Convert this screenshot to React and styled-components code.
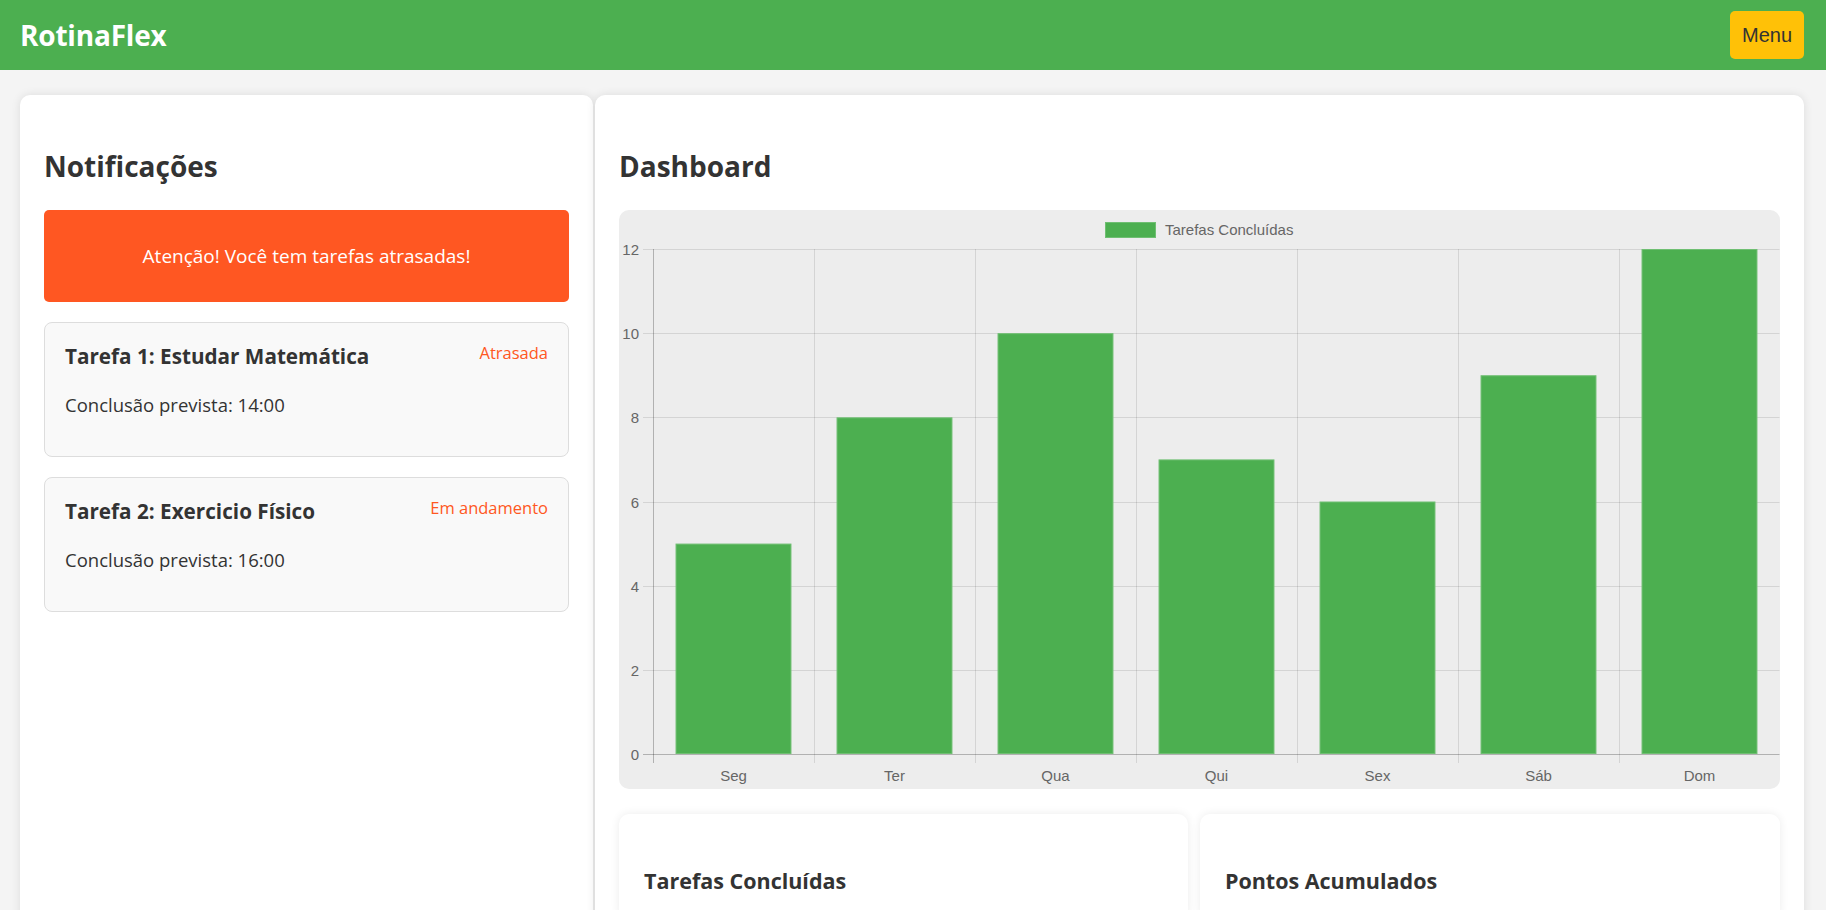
import React from 'react';
import styled, { createGlobalStyle } from 'styled-components';

const GlobalStyle = createGlobalStyle`
  body {
    margin: 0;
    background: #f4f4f4;
    color: #333;
    font-family: "Open Sans", "Noto Sans", sans-serif;
  }
`;

const Header = styled.header`
  align-items: center;
  background: #4caf50;
  box-sizing: border-box;
  display: flex;
  height: 70px;
  justify-content: space-between;
  padding: 0 22px 0 20px;
`;

const Logo = styled.h1`
  color: #fff;
  font-size: 28px;
  font-weight: 700;
  letter-spacing: -0.2px;
  line-height: 1;
  margin: 0;
`;

const MenuButton = styled.button`
  background: #ffc107;
  border: none;
  border-radius: 5px;
  color: #333;
  font-family: "Liberation Sans", Arial, sans-serif;
  font-size: 20px;
  height: 48px;
  padding: 0 12px;
`;

const Main = styled.main`
  display: grid;
  gap: 2px;
  grid-template-columns: 573px 1fr;
  padding: 25px 22px 0 20px;
`;

const Panel = styled.section`
  background: #fff;
  border-radius: 10px;
  box-shadow: 0 0 10px rgba(0, 0, 0, 0.1);
  padding: 24px;
`;

const PanelTitle = styled.h2`
  font-size: 28px;
  font-weight: 700;
  line-height: 1;
  margin: 33px 0 30px;
`;

const Alert = styled.div`
  align-items: center;
  background: #ff5722;
  border-radius: 5px;
  color: #fff;
  display: flex;
  font-size: 19px;
  height: 92px;
  justify-content: center;
  margin-bottom: 20px;
`;

const TaskCard = styled.article`
  background: #f9f9f9;
  border: 1px solid #ddd;
  border-radius: 8px;
  margin-bottom: 20px;
  padding: 20px;
`;

const TaskHead = styled.div`
  align-items: flex-start;
  display: flex;
  justify-content: space-between;
`;

const TaskTitle = styled.h3`
  font-size: 20.7px;
  font-weight: 700;
  line-height: 26px;
  margin: 0;
`;

const Status = styled.span`
  color: #ff5722;
  font-size: 16.5px;
  line-height: 20px;
`;

const TaskTime = styled.p`
  font-size: 18.5px;
  line-height: 24px;
  margin: 24px 0 19px;
`;

const ChartBox = styled.div`
  background: #ededed;
  border-radius: 10px;
  overflow: hidden;

  svg {
    display: block;
    width: 100%;
  }

  text {
    fill: #666;
    font-family: "Liberation Sans", Arial, sans-serif;
    font-size: 15px;
  }
`;

const Stats = styled.div`
  display: grid;
  gap: 12px;
  grid-template-columns: 49% 1fr;
  margin-top: 25px;
`;

const StatCard = styled.div`
  background: #fff;
  border-radius: 10px;
  box-shadow: 0 0 10px rgba(0, 0, 0, 0.08);
  padding: 25px;
`;

const StatTitle = styled.h3`
  font-size: 21.5px;
  font-weight: 700;
  line-height: 28px;
  margin: 28px 0 0;
`;

const tasks = [
  { id: 1, title: 'Tarefa 1: Estudar Matemática', status: 'Atrasada', time: '14:00' },
  { id: 2, title: 'Tarefa 2: Exercicio Físico', status: 'Em andamento', time: '16:00' },
];

const week = [
  ['Seg', 5],
  ['Ter', 8],
  ['Qua', 10],
  ['Qui', 7],
  ['Sex', 6],
  ['Sáb', 9],
  ['Dom', 12],
];

const W = 1161;
const H = 579;
const LEFT = 34;
const TOP = 39;
const BOTTOM = 544;
const RIGHT = 1160.5;
const COL = (W - LEFT) / 7;
const UNIT = (BOTTOM - TOP) / 12;

function BarChart() {
  return (
    <ChartBox>
      <svg viewBox={`0 0 ${W} ${H}`}>
        <rect x="486.5" y="12.5" width="50" height="15" fill="#4caf50" stroke="#6fbf72" />
        <text x="546" y="25">Tarefas Concluídas</text>

        {[0, 2, 4, 6, 8, 10, 12].map(v => {
          const y = Math.round(BOTTOM - v * UNIT) + 0.5;
          return (
            <g key={v}>
              <line
                x1="24"
                x2={RIGHT}
                y1={y}
                y2={y}
                stroke={v === 0 ? 'rgba(0,0,0,0.25)' : 'rgba(0,0,0,0.1)'}
              />
              <text x="20" y={y + 5} textAnchor="end">{v}</text>
            </g>
          );
        })}

        {Array.from({ length: 8 }, (_, i) => {
          const x = Math.round(LEFT + i * COL) + 0.5;
          return (
            <line
              key={i}
              x1={x}
              x2={x}
              y1={TOP}
              y2={BOTTOM + 9}
              stroke={i === 0 ? 'rgba(0,0,0,0.25)' : 'rgba(0,0,0,0.1)'}
            />
          );
        })}

        {week.map(([day, value], i) => {
          const barW = COL * 0.72;
          const x = LEFT + i * COL + (COL - barW) / 2;
          const h = value * UNIT;
          return (
            <g key={day}>
              <rect
                x={x + 0.5}
                y={BOTTOM - h + 0.5}
                width={barW - 1}
                height={h - 1}
                fill="#4caf50"
                stroke="#6fbf72"
              />
              <text x={LEFT + COL * (i + 0.5)} y="571" textAnchor="middle">{day}</text>
            </g>
          );
        })}
      </svg>
    </ChartBox>
  );
}

export default function App() {
  return (
    <>
      <GlobalStyle />
      <Header>
        <Logo>RotinaFlex</Logo>
        <MenuButton>Menu</MenuButton>
      </Header>
      <Main>
        <Panel>
          <PanelTitle>Notificações</PanelTitle>
          <Alert>Atenção! Você tem tarefas atrasadas!</Alert>
          {tasks.map(task => (
            <TaskCard key={task.id}>
              <TaskHead>
                <TaskTitle>{task.title}</TaskTitle>
                <Status>{task.status}</Status>
              </TaskHead>
              <TaskTime>Conclusão prevista: {task.time}</TaskTime>
            </TaskCard>
          ))}
        </Panel>
        <Panel>
          <PanelTitle>Dashboard</PanelTitle>
          <BarChart />
          <Stats>
            <StatCard>
              <StatTitle>Tarefas Concluídas</StatTitle>
            </StatCard>
            <StatCard>
              <StatTitle>Pontos Acumulados</StatTitle>
            </StatCard>
          </Stats>
        </Panel>
      </Main>
    </>
  );
}
